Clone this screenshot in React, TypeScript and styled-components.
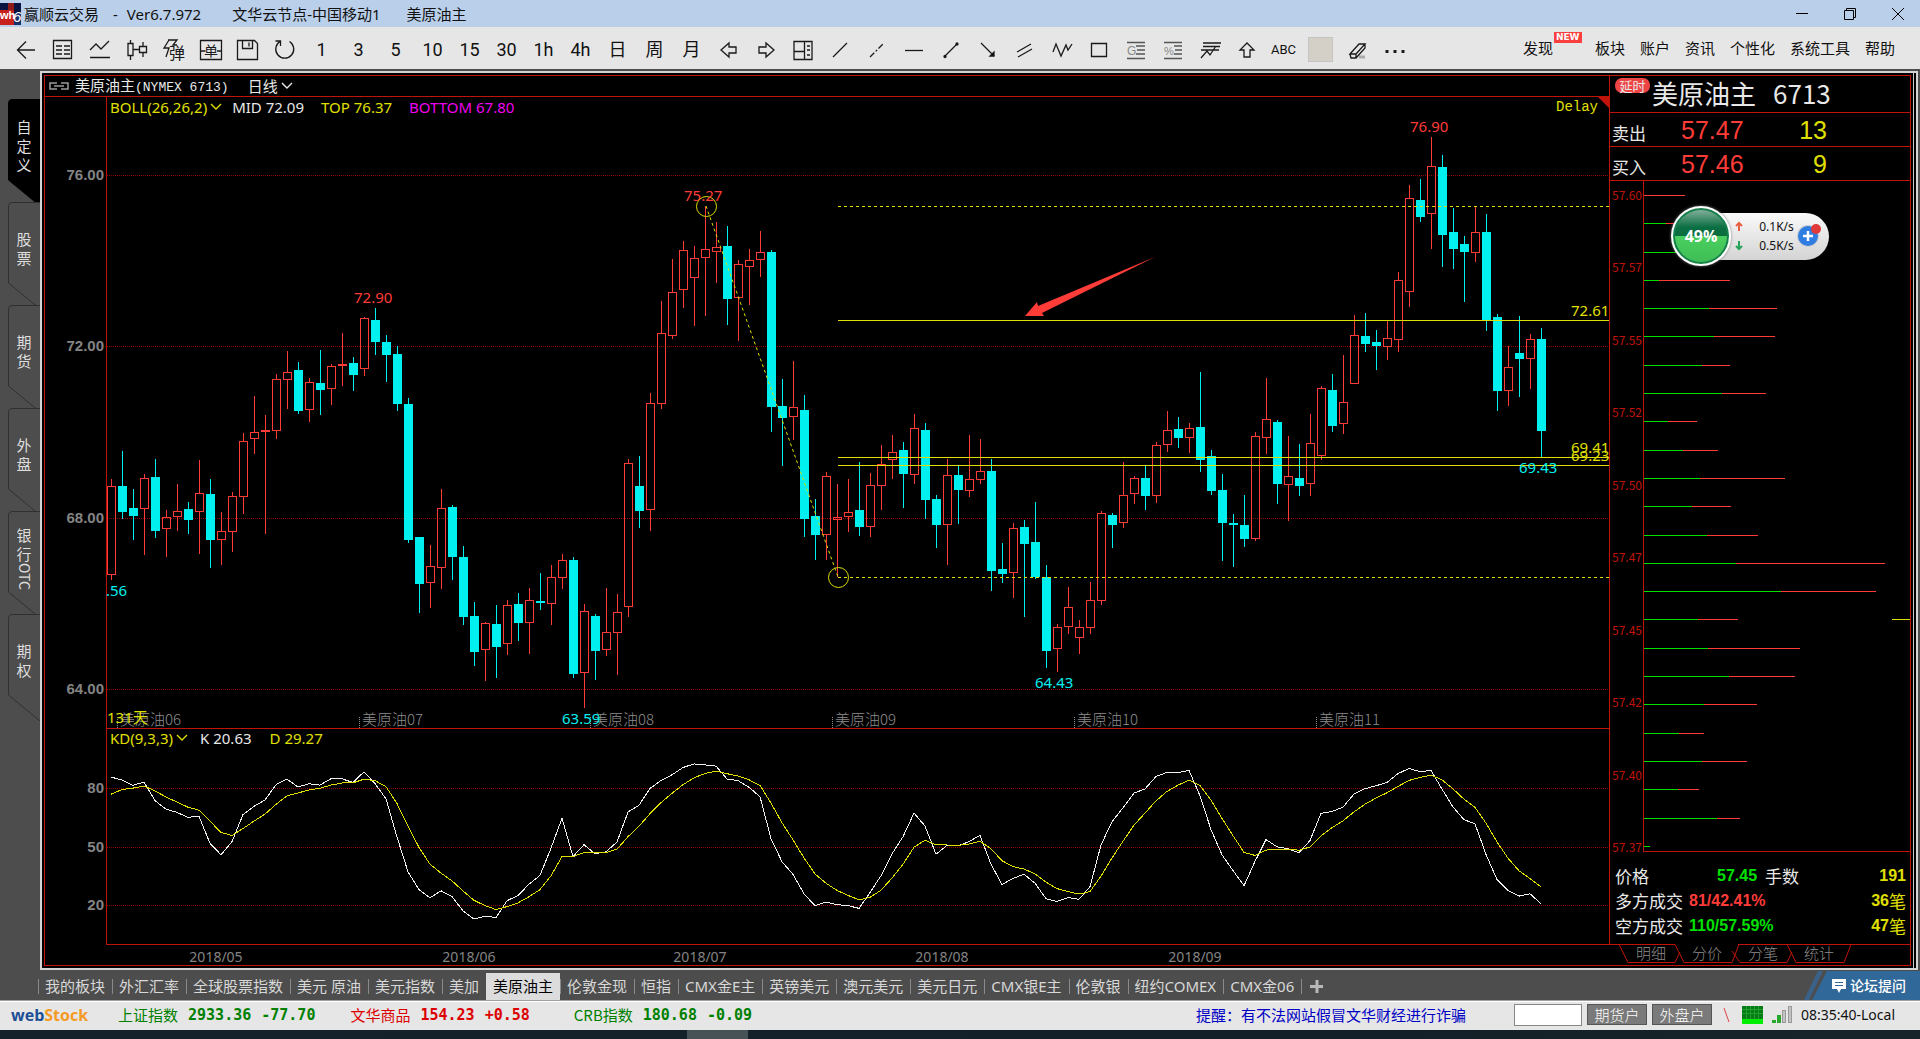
import React from "react";
import styled, { createGlobalStyle, css } from "styled-components";

const RED = "#c0140a";
const UP = "#ff3c38";
const DOWN = "#00f0f0";
const YELLOW = "#e0e000";
const GREEN = "#00e000";
const UI = `"Noto Sans", "Noto Sans CJK SC", sans-serif`;
const CJK = `"Noto Sans CJK SC", sans-serif`;
const ARIAL = `"Liberation Sans", sans-serif`;
const MONO = `"Liberation Mono", "Noto Sans CJK SC", monospace`;

const GlobalStyle = createGlobalStyle`
  * { box-sizing: border-box; }
  html, body { margin: 0; padding: 0; background: #4d4d4d; }
  body { font-family: ${UI}; font-size: 15px; overflow: hidden; }
  button { font: inherit; color: inherit; background: none; border: 0; padding: 0; cursor: pointer; }
  a { color: inherit; text-decoration: none; }
  svg { display: block; }
`;

/* ---------- shell ---------- */

const Shell = styled.div`
  height: 100vh;
  display: flex;
  flex-direction: column;
  background: #4d4d4d;
`;

const TitleBar = styled.header`
  flex: 0 0 27px;
  display: flex;
  align-items: center;
  background: #b9cfea;
  color: #111;
  line-height: 20px;
  padding-right: 16px;
`;
const AppName = styled.span`
  margin-left: 3px;
`;
const TitlePart = styled.span<{ $gap: number }>`
  margin-left: ${(p) => p.$gap}px;
`;
const WindowButtons = styled.div`
  margin-left: auto;
  display: flex;
  gap: 36px;
`;

const Toolbar = styled.nav`
  flex: 0 0 42px;
  display: flex;
  align-items: center;
  padding: 0 25px 0 7px;
  background: #e6e6e6;
  color: #111;
`;
const Tool = styled.button<{ $small?: boolean }>`
  width: 37px;
  height: 36px;
  margin-top: 3px;
  flex: none;
  display: flex;
  align-items: center;
  justify-content: center;
  font-family: Roboto, "Noto Sans CJK SC", sans-serif;
  font-weight: 400;
  font-size: ${(p) => (p.$small ? 13 : 18)}px;
  line-height: 20px;
`;
const Swatch = styled.span`
  width: 25px;
  height: 25px;
  background: #d4d0c8;
  border: 1px solid #c4c4c4;
`;
const Menu = styled.div`
  margin-left: auto;
  display: flex;
  gap: 15px;
  font-family: ${CJK};
  line-height: 20px;
`;
const MenuItem = styled.a<{ $badge?: boolean }>`
  position: relative;
  margin-right: ${(p) => (p.$badge ? 27 : 0)}px;
`;
const NewBadge = styled.span`
  position: absolute;
  left: 31px;
  top: -6px;
  padding: 0 2px;
  background: #fb3e3e;
  color: #fff;
  font: bold 9px/11px "DejaVu Sans", sans-serif;
`;

const Workspace = styled.main`
  flex: 1;
  min-height: 0;
  display: flex;
  padding: 2px 2px 0 0;
`;

/* ---------- left tabs ---------- */

const SideTabs = styled.nav`
  flex: 0 0 40px;
  padding: 28px 0 0 8px;
`;
const SideTab = styled.button`
  position: relative;
  display: block;
  width: 32px;
  height: 103px;
`;
const SideTabShape = styled.svg`
  position: absolute;
  left: 0;
  top: 0;
  overflow: visible;
`;
const SideTabText = styled.span`
  position: relative;
  height: 92px;
  margin-bottom: 11px;
  display: flex;
  flex-direction: column;
  align-items: center;
  justify-content: center;
  color: #dedede;
  font-family: ${CJK};
  font-size: 15px;
  line-height: 19px;
`;
const Sideways = styled.span`
  writing-mode: vertical-rl;
  font-size: 14px;
`;

/* ---------- chart frame ---------- */

const Frame = styled.section`
  flex: 1;
  min-width: 0;
  display: flex;
  border: 2px solid #d4d4d4;
  background: #000;
  padding: 2px 2px 2px 2px;
`;
const Panels = styled.div`
  flex: 1;
  min-width: 0;
  display: flex;
  border: 1px solid ${RED};
`;
const RightRule = styled.div`
  width: 1px;
  margin: -2px 0 -2px 2px;
  background: #c8c8c8;
`;
const Charts = styled.div`
  flex: 1;
  min-width: 0;
  display: flex;
  flex-direction: column;
`;
const ChartHeader = styled.div`
  flex: 0 0 21px;
  min-height: 0;
  display: flex;
  align-items: center;
  border-bottom: 1px solid ${RED};
  padding-left: 4px;
  color: #e8e8e8;
  font-family: ${CJK};
  line-height: 18px;
`;
const Symbol = styled.span`
  margin-left: 6px;
`;
const Code = styled.span`
  font: 13px/18px ${MONO};
`;
const Period = styled.button`
  margin-left: 19px;
  display: flex;
  align-items: center;
  gap: 3px;
`;
const Pane = styled.div<{ $height?: number }>`
  position: relative;
  min-height: 0;
  flex: ${(p) => (p.$height ? `0 0 ${p.$height}px` : "1")};
`;
const Plot = styled.svg`
  position: absolute;
  inset: 0;
  width: 100%;
  height: 100%;
`;
const Legend = styled.div`
  position: relative;
  display: flex;
  padding: 0 11px 0 65px;
  line-height: 20px;
  color: ${YELLOW};
`;
const LegendItem = styled.span<{ $gap: number; $color?: string }>`
  margin-left: ${(p) => p.$gap}px;
  color: ${(p) => p.$color ?? YELLOW};
`;
const LegendButton = styled.button`
  display: flex;
  align-items: center;
  gap: 3px;
`;
const Delay = styled.span`
  margin-left: auto;
  font: 14px/20px ${MONO};
`;
const DateText = styled.text`
  font-size: 14px;
  fill: #848484;
  text-anchor: middle;
`;
const AxisText = styled.text`
  font: bold 15px ${ARIAL};
  fill: #848484;
  text-anchor: end;
`;
const PriceText = styled.text<{ $color: string }>`
  font-family: ${UI};
  font-size: 15px;
  fill: ${(p) => p.$color};
`;
const ContractText = styled.text`
  font-family: ${CJK};
  font-weight: 300;
  font-size: 15px;
  fill: #8c8c8c;
`;

/* ---------- quote column ---------- */

const Quote = styled.aside`
  flex: 0 0 301px;
  display: flex;
  flex-direction: column;
  color: #e8e8e8;
`;
const QuoteBody = styled.div`
  flex: 1;
  min-height: 0;
  display: flex;
  flex-direction: column;
  border-left: 1px solid ${RED};
`;
const QuoteTitle = styled.h1`
  flex: 0 0 37px;
  margin: 0;
  display: flex;
  padding-left: 5px;
  border-bottom: 1px solid ${RED};
  font: 400 26px/34px ${CJK};
`;
const DelayTag = styled.span`
  width: 35px;
  height: 15px;
  margin: 2px 2px 0 0;
  border-radius: 7px;
  background: #ee4444;
  font-size: 13px;
  line-height: 15px;
  text-align: center;
`;
const QuoteCode = styled.span`
  margin-left: 17px;
`;
const QuoteRow = styled.div`
  flex: 0 0 34px;
  display: grid;
  grid-template-columns: 69px 100px 46px;
  align-items: center;
  padding-left: 2px;
  border-bottom: 1px solid ${RED};
  font-family: ${CJK};
  font-size: 17px;
`;
const QuoteLabel = styled.span`
  padding-top: 6px;
  line-height: 24px;
`;
const QuoteNumber = styled.span<{ $color: string; $right?: boolean }>`
  color: ${(p) => p.$color};
  font: 25px/32px ${ARIAL};
  text-align: ${(p) => (p.$right ? "right" : "left")};
`;
const Profile = styled.div`
  position: relative;
  flex: 1;
  min-height: 0;
  display: flex;
`;
const ProfileLabels = styled.div`
  flex: 0 0 33px;
  display: flex;
  flex-direction: column;
  justify-content: space-between;
  padding: 7px 1px 0 0;
  margin-bottom: -2px;
  color: ${RED};
  text-align: right;
  font: 12px/14px ${CJK};
`;
const ProfileBars = styled.div`
  flex: 1;
  display: flex;
  flex-direction: column;
  justify-content: space-between;
  padding: 14px 0 4px;
  border-left: 1px solid ${RED};
  border-bottom: 1px solid ${RED};
`;
const ProfileBar = styled.div`
  display: flex;
  height: 1px;
`;
const Segment = styled.span<{ $color: string; $end?: boolean }>`
  height: 1px;
  background: ${(p) => p.$color};
  ${(p) =>
    p.$end &&
    css`
      margin-left: auto;
      width: 18px;
    `}
`;
const Summary = styled.div`
  flex: 0 0 92px;
  padding: 11px 4px 0 5px;
  font: 17px/25px ${CJK};
`;
const SummaryRow = styled.div`
  display: flex;
`;
const Bold = styled.b<{ $color: string; $left?: number }>`
  margin-left: ${(p) => (p.$left === undefined ? "auto" : `${p.$left}px`)};
  color: ${(p) => p.$color};
  font: bold 16px/25px ${ARIAL};
`;
const Unit = styled.span`
  color: ${YELLOW};
`;
const SummaryLabel = styled.span<{ $left?: number }>`
  margin-left: ${(p) => p.$left ?? 0}px;
`;
const DetailTabs = styled.div`
  position: relative;
  flex: 0 0 21px;
  display: flex;
  padding-left: 14px;
`;
const DetailOutline = styled.svg`
  position: absolute;
  left: 0;
  top: 0;
`;
const DetailTab = styled.button`
  position: relative;
  width: 56px;
  height: 18px;
  color: #8c8c8c;
  font: 300 15px/18px ${CJK};
`;

/* ---------- net speed gadget ---------- */

const Gadget = styled.div`
  position: absolute;
  left: 61px;
  top: 25px;
  display: flex;
  align-items: center;
`;
const Ball = styled.div`
  position: relative;
  width: 60px;
  height: 60px;
  display: flex;
  align-items: center;
  justify-content: center;
  border: 2px solid #fff;
  border-radius: 50%;
  box-shadow: inset 0 0 0 2px #17804c, 0 0 3px #777;
  background: linear-gradient(#7fae98 4%, #0c6f43 34%, #0a6d40 50%, #49cf5f 50%, #3fbc55);
  color: #fff;
  font: bold 16px/20px "Open Sans", sans-serif;
`;
const Pill = styled.div`
  height: 47px;
  width: 128px;
  margin-left: -30px;
  padding: 4px 7px 4px 34px;
  display: flex;
  align-items: center;
  justify-content: space-between;
  border-radius: 0 24px 24px 0;
  background: linear-gradient(#fafafa, #d4d4d4);
  color: #111;
  font: 12px/19px "Noto Sans", sans-serif;
`;
const Speeds = styled.div`
  margin-left: 14px;
`;

/* ---------- bottom ---------- */

const BoardTabs = styled.nav`
  flex: 0 0 30px;
  display: flex;
  align-items: flex-end;
  padding-left: 38px;
  color: #d8d8d8;
  white-space: nowrap;
`;
const BoardTab = styled.a<{ $active?: boolean }>`
  height: 27px;
  padding: 0 7px 0 0;
  line-height: 27px;
  display: flex;
  align-items: center;
  &::before {
    content: "";
    width: 1px;
    height: 15px;
    margin-right: 6px;
    background: #8a8a8a;
  }
  ${(p) =>
    p.$active &&
    css`
      background: #dcdcdc;
      color: #000;
      &::before {
        background: transparent;
      }
    `}
`;
const Forum = styled.a`
  position: relative;
  margin-left: auto;
  width: 116px;
  height: 29px;
  display: flex;
  align-items: center;
  gap: 4px;
  padding-left: 28px;
  color: #fff;
  font: 500 14px/29px ${CJK};
  align-self: flex-start;
  margin-top: 1px;
`;
const ForumShape = styled.svg`
  position: absolute;
  inset: 0;
`;
const ForumIcon = styled.svg`
  position: relative;
`;
const ForumText = styled.span`
  position: relative;
`;
const StatusBar = styled.footer`
  flex: 0 0 30px;
  display: flex;
  align-items: center;
  border-top: 1px solid #a0a0a0;
  box-shadow: inset 0 1px 0 #fff;
  background: #e6e6e6;
  padding: 0 25px 2px 11px;
  color: #111;
  white-space: nowrap;
`;
const Logo = styled.div`
  width: 78px;
  color: #1c4f96;
  font: bold 16px/26px "Open Sans", sans-serif;
`;
const LogoAccent = styled.span`
  color: #f59a23;
  &::first-letter {
    font-size: 20px;
  }
`;
const Ticker = styled.div<{ $color: string; $left: number }>`
  display: flex;
  gap: 10px;
  margin-left: ${(p) => p.$left}px;
  color: ${(p) => p.$color};
  font: 15px/26px ${CJK};
`;
const TickerNumber = styled.b`
  font: bold 15px/26px "DejaVu Sans Mono", monospace;
`;
const Notice = styled.a`
  margin-left: auto;
  margin-right: 48px;
  color: #0000c4;
  font: 15px/26px ${CJK};
`;
const StatusInput = styled.input`
  width: 68px;
  height: 22px;
  border: 1px solid #888;
  background: #fff;
`;
const AccountButton = styled.button`
  width: 60px;
  height: 21px;
  margin-left: 5px;
  border: 1px solid #555;
  background: #7a7a7a;
  color: #fff;
  font: 300 15px/19px ${CJK};
`;
const StatusIcons = styled.svg`
  margin: 0 8px 0 11px;
`;
const Clock = styled.time`
  font-size: 14px;
`;
const Taskbar = styled.div`
  flex: 0 0 9px;
  background: linear-gradient(90deg, #16222b, #132027 70%, #17252a);
`;
const TaskItem = styled.div`
  width: 61px;
  height: 9px;
  margin-left: 687px;
  background: #465256;
`;

/* ---------- price data ---------- */

type Bar = [number, number, number, number, number];
type Block = { origin: number; unit: number; bars: Bar[] };

/* each bar: rising flag, high, body top, body bottom, low; distances below the block origin */
const blocks: Block[] = [
  {
    origin: 260,
    unit: 3,
    bars: [
      [1, 657, 678, 945, 960], [0, 573, 678, 755, 777], [0, 687, 744, 768, 840], [1, 642, 654, 747, 885],
      [0, 597, 651, 813, 834], [1, 750, 771, 807, 891], [1, 672, 753, 771, 813], [0, 726, 747, 780, 822],
      [1, 600, 699, 756, 882], [0, 657, 702, 840, 924], [1, 756, 813, 840, 915], [1, 696, 708, 816, 876],
      [1, 519, 543, 711, 762], [1, 408, 516, 537, 582], [1, 465, 510, 516, 822], [1, 342, 357, 513, 537],
      [1, 273, 336, 360, 447], [0, 306, 330, 453, 462], [1, 354, 366, 450, 486], [0, 270, 369, 390, 465],
      [1, 312, 318, 387, 435], [1, 219, 312, 318, 378], [0, 291, 309, 345, 393], [1, 171, 174, 327, 348],
      [0, 144, 180, 246, 285], [0, 225, 246, 285, 366], [0, 258, 282, 432, 453], [0, 414, 432, 840, 849],
      [0, 831, 831, 972, 1059], [1, 855, 918, 969, 1044], [1, 687, 744, 924, 987], [0, 735, 741, 891, 960],
      [0, 858, 891, 1071, 1095], [0, 1026, 1068, 1176, 1218], [1, 1086, 1089, 1170, 1263], [0, 1035, 1092, 1161, 1254],
      [1, 1020, 1035, 1152, 1185], [0, 999, 1032, 1089, 1143], [1, 984, 1020, 1089, 1182], [0, 939, 1023, 1029, 1050],
      [1, 915, 951, 1032, 1095], [1, 882, 900, 954, 987], [0, 891, 900, 1242, 1254],
    ],
  },
  {
    origin: 170,
    unit: 2.8,
    bars: [
      [1, 1215, 1236, 1408, 1506], [0, 1243, 1249, 1347, 1428], [1, 1170, 1294, 1344, 1361], [1, 1187, 1238, 1296, 1414],
      [1, 809, 821, 1223, 1252], [0, 801, 885, 955, 1002], [1, 624, 653, 951, 1011], [1, 367, 457, 655, 669],
      [1, 249, 342, 465, 473], [1, 199, 225, 336, 386], [1, 213, 246, 302, 437], [1, 101, 221, 246, 409],
      [1, 146, 216, 230, 316], [0, 157, 213, 361, 434], [1, 252, 263, 358, 479], [1, 221, 252, 272, 378],
      [1, 171, 230, 252, 300], [0, 224, 230, 664, 734], [0, 585, 661, 694, 829], [1, 535, 664, 692, 756],
      [0, 630, 672, 977, 1028], [0, 921, 969, 1022, 1092], [1, 846, 857, 1022, 1092],
    ],
  },
  {
    origin: 260,
    unit: 3,
    bars: [
      [1, 672, 771, 780, 951], [1, 657, 756, 771, 816], [0, 606, 750, 801, 828], [1, 639, 675, 801, 831],
      [1, 555, 612, 678, 750], [1, 525, 576, 600, 657], [0, 546, 570, 642, 744], [1, 462, 504, 645, 672],
      [0, 489, 510, 720, 777], [0, 705, 717, 795, 864], [1, 597, 645, 795, 915], [0, 618, 645, 690, 792],
      [1, 525, 657, 693, 711], [1, 537, 633, 660, 672], [0, 597, 633, 933, 993], [0, 849, 927, 942, 969],
      [1, 789, 804, 939, 1014], [0, 780, 801, 852, 1071], [0, 726, 846, 951, 957], [0, 915, 951, 1173, 1224],
      [1, 1092, 1101, 1167, 1236], [1, 981, 1041, 1101, 1122], [1, 1080, 1101, 1134, 1182], [1, 966, 1020, 1104, 1122],
      [1, 753, 759, 1023, 1035], [0, 759, 765, 795, 864], [1, 606, 705, 789, 804], [1, 648, 654, 702, 732],
      [0, 618, 654, 708, 750], [1, 546, 555, 708, 729], [1, 453, 510, 555, 576], [0, 471, 507, 534, 564],
      [1, 489, 504, 534, 579], [0, 336, 501, 600, 636], [0, 570, 588, 693, 705], [0, 642, 690, 789, 903],
      [0, 762, 789, 795, 921], [0, 705, 795, 837, 861],
    ],
  },
  {
    origin: 110,
    unit: 3,
    bars: [
      [1, 966, 978, 1287, 1293], [1, 804, 927, 984, 1032], [0, 930, 936, 1122, 1182], [1, 978, 1098, 1125, 1233],
      [0, 1002, 1104, 1128, 1158], [1, 912, 999, 1122, 1158], [1, 828, 834, 1038, 1050], [0, 792, 840, 948, 966],
      [1, 735, 876, 942, 972], [1, 615, 675, 822, 822], [0, 609, 678, 702, 726], [0, 660, 696, 708, 780],
      [1, 633, 684, 711, 750], [1, 486, 510, 690, 726], [1, 225, 264, 546, 591], [0, 207, 270, 321, 336],
      [1, 81, 168, 312, 417], [0, 135, 171, 375, 471], [0, 294, 366, 417, 477], [0, 378, 402, 426, 576],
      [1, 291, 366, 429, 456], [0, 312, 366, 633, 663], [0, 612, 621, 843, 903], [1, 708, 771, 843, 888],
      [0, 618, 729, 747, 861], [1, 672, 687, 747, 837], [0, 654, 687, 963, 1042],
    ],
  },
];

const candles = blocks.flatMap(({ origin, unit, bars }) =>
  bars.map(([up, high, top, bottom, low]) => {
    const y = (v: number) => Math.round(origin + v / unit);
    return { up: up === 1, high: y(high), top: y(top), bottom: y(bottom), low: y(low) };
  })
);

const candleX = (i: number) => 111 + 11 * i;

/* KD(9,3,3): values before a full nine-bar window come from the earlier history */
const earlierK = [85.6, 84.1, 81.4, 83.1, 73.5, 69.2, 67.5, 65, 65.5];
const kValues: number[] = [];
const dValues: number[] = [];
candles.forEach((c, i) => {
  if (i < earlierK.length) {
    kValues.push(earlierK[i]);
  } else {
    const win = candles.slice(i - 8, i + 1);
    const low = Math.max(...win.map((w) => w.low));
    const high = Math.min(...win.map((w) => w.high));
    const close = c.up ? c.top : c.bottom;
    kValues.push((2 * kValues[i - 1] + ((low - close) / (low - high)) * 100) / 3);
  }
  dValues.push(i === 0 ? 76.8 : (2 * dValues[i - 1] + kValues[i]) / 3);
});
const kdPoints = (values: number[]) =>
  values.map((v, i) => `${candleX(i)},${(788 + (80 - v) * 1.95).toFixed(1)}`).join(" ");

const priceGrid: [string, number][] = [["76.00", 175], ["72.00", 346], ["68.00", 518], ["64.00", 689]];
const kdGrid: [string, number][] = [["80", 788], ["50", 847], ["20", 905]];
const contracts: [string, number][] = [["06", 117], ["07", 359], ["08", 590], ["09", 832], ["10", 1074], ["11", 1316]];
const months: [string, number][] = [["2018/05", 216], ["2018/06", 469], ["2018/07", 700], ["2018/08", 942], ["2018/09", 1195]];
const priceMarks: [string, number, number, string][] = [
  ["72.90", 354, 303, UP], ["76.90", 1410, 132, UP], ["75.27", 684, 201, UP],
  [".56", 106, 596, DOWN], ["63.59", 562, 724, DOWN], ["64.43", 1035, 688, DOWN], ["69.43", 1519, 473, DOWN],
  ["72.61", 1571, 316, YELLOW], ["69.41", 1571, 453, YELLOW], ["69.23", 1571, 461, YELLOW],
];

const profile: [number, number][] = [
  [0, 41], [22, 60], [32, 70], [15, 86], [65, 133], [70, 131], [58, 86], [78, 122], [24, 53], [39, 74], [56, 141], [48, 87],
  [63, 114], [92, 241], [137, 232], [54, 94], [64, 156], [85, 151], [60, 113], [35, 60], [58, 103], [34, 55], [73, 96], [6, 6],
];
const profilePrices = ["57.60", "57.57", "57.55", "57.52", "57.50", "57.47", "57.45", "57.42", "57.40", "57.37"];

const boards = [
  "我的板块", "外汇汇率", "全球股票指数", "美元 原油", "美元指数", "美加", "美原油主", "伦敦金现", "恒指",
  "CMX金E主", "英镑美元", "澳元美元", "美元日元", "CMX银E主", "伦敦银", "纽约COMEX", "CMX金06",
];

/* ---------- icons ---------- */

const Ico = ({ children }: { children: React.ReactNode }) => (
  <svg width="26" height="26" viewBox="0 0 26 26" fill="none" stroke="#1a1a1a" strokeWidth="1.3" aria-hidden>
    {children}
  </svg>
);

const Chevron = ({ color }: { color: string }) => (
  <svg width="12" height="8" viewBox="0 0 12 8" fill="none" stroke={color} strokeWidth="1.4" aria-hidden>
    <path d="M1 1l5 5 5-5" />
  </svg>
);

const tools: [string, React.ReactNode][] = [
  ["返回", <Ico><path d="M22 13H5M13 4.500L4.500 13l8.500 8.500" /></Ico>],
  ["报价", <Ico><path d="M3.500 3.500h18v18h-18zM6 9h6M6 13h6M6 17h6M14 9h6M14 13h6M14 17h6" /></Ico>],
  ["分时", <Ico><path d="M3 13l6-6 5 5 8-8M3 20.500h20" /></Ico>],
  ["K线", <Ico><path d="M4 6.500h5v12H4zM6.500 3v3M6.500 19v4M9 12.500h6M15.500 9.500h7v6h-7zM19 5v5M19 16v4" /></Ico>],
  ["闪电弹窗", <Ico><path d="M8 3L3 11h5L5 20M7 3h9l-4 5h4" /><text x="8" y="22" fontSize="16" fontFamily={CJK} fill="#1a1a1a" stroke="none">弹</text></Ico>],
  ["下单", <Ico><path d="M2.500 3.500h21v19h-21zM2.500 14h5M19 14h5" /><text x="6" y="19" fontSize="14" fontFamily={CJK} fill="#1a1a1a" stroke="none">单</text></Ico>],
  ["保存", <Ico><path d="M2.500 3.500h17l3 3v16h-20zM7.500 3.500v8h10v-8M14 5.500v4" /></Ico>],
  ["刷新", <Ico><path d="M8 4.500a9 9 0 1 0 9.500 0M8.500 9V4H3.500" /></Ico>],
  ...["1", "3", "5", "10", "15", "30", "1h", "4h", "日", "周", "月"].map((t) => [t, t] as [string, React.ReactNode]),
  ["上一个", <Ico><path d="M5 13l8-7v4h7v6h-7v4z" /></Ico>],
  ["下一个", <Ico><path d="M21 13l-8-7v4H6v6h7v4z" /></Ico>],
  ["窗口", <Ico><path d="M4 4.500h18v18H4zM14.500 4.500v18M4 14.500h10M17 9h3M17 13h3M17 18h3" /></Ico>],
  ["直线", <Ico><path d="M6 20L20 6" /></Ico>],
  ["虚线", <Ico><path d="M6 20L20 6" strokeDasharray="6 2 2 2" /></Ico>],
  ["水平线", <Ico><path d="M4 13.500h18" /></Ico>],
  ["线段", <Ico><path d="M7 19L19 7" /><circle cx="7" cy="19.500" r="1" fill="#000" /><circle cx="19" cy="7" r="1" fill="#000" /></Ico>],
  ["箭头", <Ico><path d="M6 6l13 13" /><path d="M19 15v4h-4z" fill="#000" /></Ico>],
  ["平行线", <Ico><path d="M5 15L19 7M6 20l14-8" /></Ico>],
  ["波浪线", <Ico><path d="M4 15l3-8 5 12 5-11 2 5 4-6" /></Ico>],
  ["矩形", <Ico><path d="M5.500 6.500h15v13h-15z" /></Ico>],
  ["黄金分割", <Ico><path d="M4 5.500h18M4 21.500h18M13 9h9M14 13h8M13 17h9" stroke="#555" /><text x="4" y="18" fontSize="12" fontFamily={ARIAL} fill="#888" stroke="none">G</text></Ico>],
  ["百分比线", <Ico><path d="M4 5.500h18M4 21.500h18M14 9h8M15 13h7M14 17h8" stroke="#555" /><text x="4" y="18" fontSize="11" fontFamily={ARIAL} fill="#888" stroke="none">%</text></Ico>],
  ["波段", <Ico><path d="M6 6h18M6 9.500h17M4 13h18M4 21l6-7 3 4 6-9" /></Ico>],
  ["上箭头", <Ico><path d="M13 6l-7 7h4v7h6v-7h4z" /></Ico>],
  ["文字", "ABC"],
  ["颜色", <Swatch />],
  ["橡皮擦", <Ico><path d="M14 20h6" stroke="#aaa" strokeWidth="3" /><path d="M5 17l9-10h6l-9 10zM5 17l1 4h5l9-10V7M11 17v4" /></Ico>],
  ["更多", <Ico><path d="M3.500 14.500h3M11.500 14.500h3M19.500 14.500h3" strokeWidth="3" /></Ico>],
];

const sideTabs: [string[], string?][] = [
  [["自", "定", "义"]], [["股", "票"]], [["期", "货"]], [["外", "盘"]], [["银", "行"], "OTC"], [["期", "权"]],
];

/* ---------- parts ---------- */

function PriceChart() {
  return (
    <Plot viewBox="45 97 1564 631" preserveAspectRatio="none">
      {priceGrid.map(([label, y]) => (
        <g key={label}>
          <path d={`M107 ${y + 0.5}H1609`} stroke="#8b0000" strokeDasharray="1 1" />
          <AxisText x="104" y={y + 5}>{label}</AxisText>
        </g>
      ))}
      <path d="M106.500 97V728" stroke={RED} />
      {contracts.map(([n, x]) => (
        <g key={n}>
          <path d={`M${x + 0.5} 717V728`} stroke="#8c8c8c" strokeDasharray="1 1" />
          <ContractText x={x + 3} y="725">美原油{n}</ContractText>
        </g>
      ))}
      <g shapeRendering="crispEdges">
        {candles.map((c, i) => {
          const x = candleX(i);
          return c.up ? (
            <g key={i} stroke={UP} fill="none">
              <path d={`M${x + 0.5} ${c.high}V${c.top}M${x + 0.5} ${c.bottom}V${c.low}`} />
              <rect x={x - 3.5} y={c.top + 0.5} width="8" height={Math.max(1, c.bottom - c.top - 1)} />
            </g>
          ) : (
            <g key={i} fill={DOWN}>
              <rect x={x} y={c.high} width="1" height={c.low - c.high} />
              <rect x={x - 4} y={c.top} width="9" height={c.bottom - c.top} />
            </g>
          );
        })}
      </g>
      <g stroke={YELLOW} fill="none">
        <path d="M838 320.500H1609M838 457.500H1609M838 465.500H1609" />
        <path d="M838 206.500H1609M838 577.500H1609" strokeDasharray="3 3" />
        <path d="M706 206L838 577" strokeDasharray="3 3" />
        <circle cx="706.500" cy="206.500" r="10" />
        <circle cx="838.500" cy="577.500" r="10" />
      </g>
      {priceMarks.map(([label, x, y, color]) => (
        <PriceText key={label} x={x} y={y} $color={color}>{label}</PriceText>
      ))}
      <PriceText x="107" y="723" $color={YELLOW}>131天</PriceText>
      <path d="M1025 316L1037 302L1038 306L1155 257L1042 313L1044 316Z" fill={UP} />
      <path d="M1598 97H1609V108Z" fill={RED} />
    </Plot>
  );
}

function KdChart() {
  return (
    <Plot viewBox="45 728 1564 217" preserveAspectRatio="none">
      {kdGrid.map(([label, y]) => (
        <g key={label}>
          <path d={`M107 ${y + 0.5}H1609`} stroke="#8b0000" strokeDasharray="1 1" />
          <AxisText x="104" y={y + 5}>{label}</AxisText>
        </g>
      ))}
      <path d="M106.500 728V944M106 728.500H1609M106 944.500H1609" stroke={RED} fill="none" />
      <g fill="none" shapeRendering="crispEdges">
        <polyline points={kdPoints(kValues)} stroke="#f0f0f0" />
        <polyline points={kdPoints(dValues)} stroke={YELLOW} />
      </g>
    </Plot>
  );
}

function NetSpeed() {
  return (
    <Gadget>
      <Ball>49%</Ball>
      <Pill>
        <svg width="8" height="30" viewBox="0 0 8 30" fill="none" strokeWidth="2" aria-hidden>
          <path d="M4 10V2M1 5l3-3 3 3" stroke="#e86046" />
          <path d="M4 20v8M1 25l3 3 3-3" stroke="#27a35a" />
        </svg>
        <Speeds>
          <div>0.1K/s</div>
          <div>0.5K/s</div>
        </Speeds>
        <svg width="26" height="26" viewBox="0 0 26 26" aria-hidden>
          <circle cx="12" cy="13" r="11" fill="#c8ccd2" />
          <circle cx="12" cy="13" r="10" fill="#2f7de0" />
          <path d="M12 8v10M7 13h10" stroke="#fff" strokeWidth="2.500" />
          <circle cx="20" cy="6" r="5" fill="#e03a3a" />
        </svg>
      </Pill>
    </Gadget>
  );
}

function QuotePanel() {
  return (
    <Quote>
      <QuoteBody>
        <QuoteTitle>
          <DelayTag>延时</DelayTag>
          <span>美原油主</span>
          <QuoteCode>6713</QuoteCode>
        </QuoteTitle>
        <QuoteRow>
          <QuoteLabel>卖出</QuoteLabel>
          <QuoteNumber $color={UP}>57.47</QuoteNumber>
          <QuoteNumber $color={YELLOW} $right>13</QuoteNumber>
        </QuoteRow>
        <QuoteRow>
          <QuoteLabel>买入</QuoteLabel>
          <QuoteNumber $color={UP}>57.46</QuoteNumber>
          <QuoteNumber $color={YELLOW} $right>9</QuoteNumber>
        </QuoteRow>
        <Profile>
          <ProfileLabels>
            {profilePrices.map((p) => <span key={p}>{p}</span>)}
          </ProfileLabels>
          <ProfileBars>
            {profile.map(([sell, total], i) => (
              <ProfileBar key={i}>
                <Segment $color={GREEN} style={{ width: sell }} />
                <Segment $color={UP} style={{ width: total - sell }} />
                {i === 15 && <Segment $color={YELLOW} $end />}
              </ProfileBar>
            ))}
          </ProfileBars>
          <NetSpeed />
        </Profile>
        <Summary>
          <SummaryRow>
            <SummaryLabel>价格</SummaryLabel>
            <Bold $color={GREEN} $left={68}>57.45</Bold>
            <SummaryLabel $left={8}>手数</SummaryLabel>
            <Bold $color={YELLOW}>191</Bold>
          </SummaryRow>
          <SummaryRow>
            <SummaryLabel>多方成交</SummaryLabel>
            <Bold $color={UP} $left={6}>81/42.41%</Bold>
            <Bold $color={YELLOW}>36</Bold>
            <Unit>笔</Unit>
          </SummaryRow>
          <SummaryRow>
            <SummaryLabel>空方成交</SummaryLabel>
            <Bold $color={GREEN} $left={6}>110/57.59%</Bold>
            <Bold $color={YELLOW}>47</Bold>
            <Unit>笔</Unit>
          </SummaryRow>
        </Summary>
      </QuoteBody>
      <DetailTabs>
        <DetailOutline width="301" height="21" viewBox="0 0 301 21" fill="none" stroke={RED} aria-hidden>
          <path d="M0 .500H66M129 .500H301M10 .500L19 18.500H66L71 8M66 .500L75 18.500H123L130 .500M123 7L131 18.500H178L183 8M178 .500L187 18.500H235L242 .500" />
        </DetailOutline>
        {["明细", "分价", "分笔", "统计"].map((t) => <DetailTab key={t}>{t}</DetailTab>)}
      </DetailTabs>
    </Quote>
  );
}

export default function App() {
  return (
    <Shell>
      <GlobalStyle />
      <TitleBar>
        <svg width="21" height="22" viewBox="0 0 21 22" aria-hidden>
          <rect width="21" height="22" fill="#0a1440" />
          <rect y="7" width="14" height="15" fill="#c8201c" />
          <rect x="14" y="10" width="7" height="12" fill="#16306e" />
          <rect x="8" width="6" height="7" fill="#8e1a1a" />
          <text x="0" y="16" fontSize="11" fontWeight="bold" fontFamily={ARIAL} fill="#fff">wh</text>
          <text x="13" y="19" fontSize="15" fontStyle="italic" fontFamily={ARIAL} fill="#fff">6</text>
        </svg>
        <AppName>赢顺云交易</AppName>
        <TitlePart $gap={14}>-</TitlePart>
        <TitlePart $gap={9}>Ver6.7.972</TitlePart>
        <TitlePart $gap={31}>文华云节点-中国移动1</TitlePart>
        <TitlePart $gap={26}>美原油主</TitlePart>
        <WindowButtons>
          <button aria-label="最小化"><svg width="12" height="12" viewBox="0 0 12 12" stroke="#000"><path d="M0 5.500h12" /></svg></button>
          <button aria-label="还原"><svg width="12" height="12" viewBox="0 0 12 12" stroke="#000" fill="none"><path d="M.500 2.500h9v9h-9zM2.500 2.500v-2h9v9h-2" /></svg></button>
          <button aria-label="关闭"><svg width="12" height="12" viewBox="0 0 12 12" stroke="#000"><path d="M0 0l12 12M12 0L0 12" /></svg></button>
        </WindowButtons>
      </TitleBar>

      <Toolbar>
        {tools.map(([label, icon]) => (
          <Tool key={label} aria-label={label} $small={icon === "ABC"}>{icon}</Tool>
        ))}
        <Menu>
          <MenuItem href="#" $badge>发现<NewBadge>NEW</NewBadge></MenuItem>
          {["板块", "账户", "资讯", "个性化", "系统工具", "帮助"].map((m) => (
            <MenuItem key={m} href="#">{m}</MenuItem>
          ))}
        </Menu>
      </Toolbar>

      <Workspace>
        <SideTabs>
          {sideTabs.map(([chars, sideways], i) => (
            <SideTab key={i}>
              <SideTabShape width="32" height="108" viewBox="0 0 32 108" aria-hidden>
                <path
                  d="M32 .500H4Q.500 .500 .500 4V81L32 107"
                  fill={i === 0 ? "#000" : "#4d4d4d"}
                  stroke={i === 0 ? "#000" : "#303030"}
                />
              </SideTabShape>
              <SideTabText>
                {chars.map((c) => <span key={c}>{c}</span>)}
                {sideways && <Sideways>{sideways}</Sideways>}
              </SideTabText>
            </SideTab>
          ))}
        </SideTabs>

        <Frame>
          <Panels>
            <Charts>
              <ChartHeader>
                <svg width="20" height="8" viewBox="0 0 20 8" fill="none" stroke="#9a9a9a" strokeWidth="1.500" aria-hidden>
                  <path d="M8 1H1v6h7M12 1h7v6h-7M5 4h10" />
                </svg>
                <Symbol>美原油主<Code>(NYMEX 6713)</Code></Symbol>
                <Period>日线<Chevron color="#e8e8e8" /></Period>
              </ChartHeader>
              <Pane>
                <PriceChart />
                <Legend>
                  <LegendButton>BOLL(26,26,2)<Chevron color={YELLOW} /></LegendButton>
                  <LegendItem $gap={10} $color="#e8e8e8">MID 72.09</LegendItem>
                  <LegendItem $gap={17}>TOP 76.37</LegendItem>
                  <LegendItem $gap={17} $color="#f000f0">BOTTOM 67.80</LegendItem>
                  <Delay>Delay</Delay>
                </Legend>
              </Pane>
              <Pane $height={217}>
                <KdChart />
                <Legend>
                  <LegendButton>KD(9,3,3)<Chevron color={YELLOW} /></LegendButton>
                  <LegendItem $gap={12} $color="#e8e8e8">K 20.63</LegendItem>
                  <LegendItem $gap={18}>D 29.27</LegendItem>
                </Legend>
              </Pane>
              <Pane $height={20}>
                <Plot viewBox="45 945 1564 20" preserveAspectRatio="none">
                  {months.map(([m, x]) => <DateText key={m} x={x} y="962">{m}</DateText>)}
                </Plot>
              </Pane>
            </Charts>
            <QuotePanel />
          </Panels>
          <RightRule />
        </Frame>
      </Workspace>

      <BoardTabs>
        {boards.map((b) => (
          <BoardTab key={b} href="#" $active={b === "美原油主"}>{b}</BoardTab>
        ))}
        <BoardTab href="#" aria-label="添加">
          <svg width="18" height="13" viewBox="0 0 18 13" stroke="#b8b8b8" strokeWidth="3" aria-hidden>
            <path d="M9 0v13M2 6.500h13" />
          </svg>
        </BoardTab>
        <Forum href="#">
          <ForumShape width="116" height="29" viewBox="0 0 116 29" aria-hidden>
            <path d="M23 0H116V29H8Z" fill="#31689a" />
            <path d="M14 0h5L5 29H0Z" fill="#3a6288" />
          </ForumShape>
          <ForumIcon width="14" height="14" viewBox="0 0 14 14" aria-hidden>
            <path d="M0 0h14v10H9l-2 4-2-4H0z" fill="#fff" />
            <path d="M3 3.500h8M3 6.500h8" stroke="#31689a" />
          </ForumIcon>
          <ForumText>论坛提问</ForumText>
        </Forum>
      </BoardTabs>

      <StatusBar>
        <Logo>web<LogoAccent>Stock</LogoAccent></Logo>
        <Ticker $color="#008000" $left={29}>上证指数<TickerNumber>2933.36</TickerNumber><TickerNumber>-77.70</TickerNumber></Ticker>
        <Ticker $color="#dc0000" $left={35}>文华商品<TickerNumber>154.23</TickerNumber><TickerNumber>+0.58</TickerNumber></Ticker>
        <Ticker $color="#008000" $left={44}>CRB指数 <TickerNumber>180.68</TickerNumber><TickerNumber>-0.09</TickerNumber></Ticker>
        <Notice href="#">提醒：有不法网站假冒文华财经进行诈骗</Notice>
        <StatusInput aria-label="代码" />
        <AccountButton>期货户</AccountButton>
        <AccountButton>外盘户</AccountButton>
        <StatusIcons width="70" height="20" viewBox="0 0 70 20" aria-hidden>
          <path d="M1 3l5 14" stroke="#e04040" fill="none" />
          <rect x="19" y="1" width="21" height="13" fill="#0a7a18" />
          <path d="M19 4.500h21M19 8.500h21M23.500 1v13M27.500 1v13M31.500 1v13M35.500 1v13" stroke="#19a428" />
          <rect x="19" y="14" width="21" height="5" fill="#00ee00" />
          <rect x="49" y="15" width="4" height="3" fill="#28a828" />
          <rect x="54" y="10" width="4" height="8" fill="#28a828" />
          <rect x="59.500" y="5.500" width="3" height="12" fill="#c4c4c4" stroke="#999" />
          <rect x="65.500" y="1.500" width="3" height="16" fill="#c4c4c4" stroke="#999" />
        </StatusIcons>
        <Clock>08:35:40-Local</Clock>
      </StatusBar>
      <Taskbar><TaskItem /></Taskbar>
    </Shell>
  );
}
